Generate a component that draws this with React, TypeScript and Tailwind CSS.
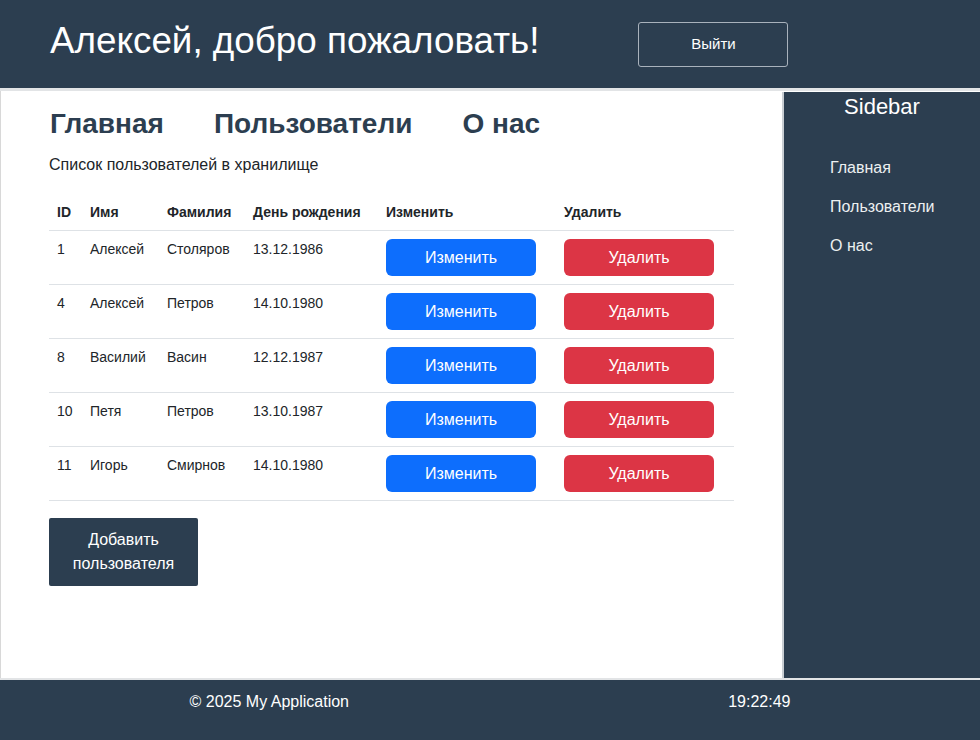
import React from "react";

const users = [
  { id: 1, name: "Алексей", last: "Столяров", bd: "13.12.1986" },
  { id: 4, name: "Алексей", last: "Петров", bd: "14.10.1980" },
  { id: 8, name: "Василий", last: "Васин", bd: "12.12.1987" },
  { id: 10, name: "Петя", last: "Петров", bd: "13.10.1987" },
  { id: 11, name: "Игорь", last: "Смирнов", bd: "14.10.1980" },
];

export default function App() {
  return (
    <div className="w-[980px] h-[740px] flex flex-col font-['Liberation_Sans',Arial,sans-serif] bg-white overflow-hidden">
      <header className="h-[88px] bg-[#2c3e50] flex items-center pl-[50px] shrink-0">
        <h1 className="text-[36.8px] leading-[42px] text-white font-normal mb-[6px]">Алексей, добро пожаловать!</h1>
        <button className="ml-[99px] w-[150px] h-[45px] border border-[#a9b2bc] rounded-[3px] text-[15px] text-white bg-transparent">
          Выйти
        </button>
      </header>
      <div className="h-[3px] bg-[#e2e4e6] shrink-0" />
      <div className="flex flex-1 min-h-0">
        <main className="flex-1 border-l border-[#d8d8d8] bg-white px-12 pt-[17px]">
          <nav className="flex gap-[50px] pl-px text-[28px] leading-[32px] font-bold text-[#2c3e50]">
            <span>Главная</span>
            <span>Пользователи</span>
            <span>О нас</span>
          </nav>
          <p className="mt-[13px] text-[16px] leading-[24px] text-[#212529]">Список пользователей в хранилище</p>
          <table className="mt-[17px] w-[685px] border-collapse text-[14px] leading-[20px] text-[#212529] table-fixed">
            <colgroup>
              <col className="w-[33px]" />
              <col className="w-[77px]" />
              <col className="w-[86px]" />
              <col className="w-[133px]" />
              <col className="w-[178px]" />
              <col className="w-[178px]" />
            </colgroup>
            <thead>
              <tr className="border-b border-[#dee2e6]">
                <th className="p-2 text-left font-bold">ID</th>
                <th className="p-2 text-left font-bold">Имя</th>
                <th className="p-2 text-left font-bold">Фамилия</th>
                <th className="p-2 text-left font-bold">День рождения</th>
                <th className="p-2 text-left font-bold">Изменить</th>
                <th className="p-2 text-left font-bold">Удалить</th>
              </tr>
            </thead>
            <tbody>
              {users.map((u) => (
                <tr key={u.id} className="border-b border-[#dee2e6]">
                  <td className="p-2 align-top">{u.id}</td>
                  <td className="p-2 align-top">{u.name}</td>
                  <td className="p-2 align-top">{u.last}</td>
                  <td className="p-2 align-top">{u.bd}</td>
                  <td className="p-2 align-top">
                    <button className="w-[150px] h-[37px] rounded-[6px] bg-[#0d6efd] text-white text-[16px] leading-[24px] flex items-center justify-center">
                      Изменить
                    </button>
                  </td>
                  <td className="p-2 align-top">
                    <button className="w-[150px] h-[37px] rounded-[6px] bg-[#dc3545] text-white text-[16px] leading-[24px] flex items-center justify-center">
                      Удалить
                    </button>
                  </td>
                </tr>
              ))}
            </tbody>
          </table>
          <button className="mt-[17px] w-[149px] h-[68px] bg-[#2c3e50] text-white text-[16px] leading-[24px] rounded-[2px] flex flex-col items-center justify-center">
            <span>Добавить</span>
            <span>пользователя</span>
          </button>
        </main>
        <aside className="w-[198px] bg-[#2c3e50] border-l-2 border-[#c9ced3] mt-[1px] shrink-0 text-white">
          <div className="text-[22px] leading-[25px] text-center pt-[2px]">Sidebar</div>
          <ul className="mt-[40px] pl-[46px] flex flex-col gap-[21px] text-[16px] leading-[18px] text-[#ecf0f1]">
            <li>Главная</li>
            <li>Пользователи</li>
            <li>О нас</li>
          </ul>
        </aside>
      </div>
      <div className="h-[2px] bg-[#e2e4e6] shrink-0" />
      <footer className="h-[60px] bg-[#2c3e50] flex justify-around items-start pt-[13px] text-white text-[16px] leading-[18px] shrink-0">
        <span>© 2025 My Application</span>
        <span>19:22:49</span>
      </footer>
    </div>
  );
}
